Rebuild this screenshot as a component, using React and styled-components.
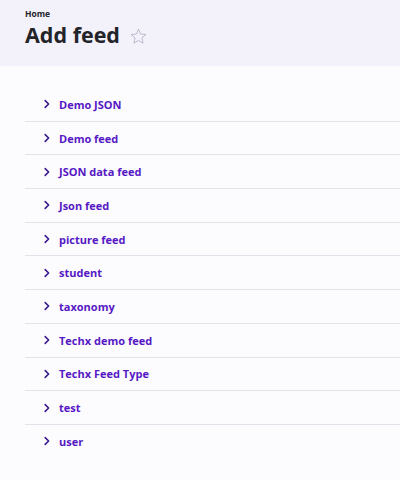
import React from "react";
import styled, { createGlobalStyle } from "styled-components";

const GlobalStyle = createGlobalStyle`
  body {
    margin: 0;
    background: #fcfcfe;
    font-family: "Open Sans", "DejaVu Sans", sans-serif;
  }
`;

const feeds = [
  "Demo JSON",
  "Demo feed",
  "JSON data feed",
  "Json feed",
  "picture feed",
  "student",
  "taxonomy",
  "Techx demo feed",
  "Techx Feed Type",
  "test",
  "user",
];

const App = () => {
  return (
    <>
      <GlobalStyle />
      <Header>
        <Crumb href="#">Home</Crumb>
        <TitleRow>
          <Title>Add feed</Title>
          <Star viewBox="0 0 24 24">
            <path d="M12 2.8l2.7 6.1 6.6.6-5 4.4 1.5 6.5L12 17l-5.8 3.4 1.5-6.5-5-4.4 6.6-.6z" />
          </Star>
        </TitleRow>
      </Header>
      <Main>
        <List>
          {feeds.map((name) => (
            <Item key={name}>
              <Link href="#">
                <Chevron viewBox="0 0 10 10">
                  <path d="M3.2 1.6L6.6 5 3.2 8.4" />
                </Chevron>
                {name}
              </Link>
            </Item>
          ))}
        </List>
      </Main>
    </>
  );
};
export default App;

const Header = styled.header`
  box-sizing: border-box;
  background: #f3f1f9;
  padding: 8px 25px 0;
  height: 66px;
`;
const Crumb = styled.a`
  display: block;
  font-size: 8.5px;
  font-weight: 700;
  color: #232429;
  text-decoration: none;
  line-height: 11px;
`;
const TitleRow = styled.div`
  display: flex;
  align-items: center;
  gap: 9px;
  margin-top: 2px;
`;
const Title = styled.h1`
  margin: 0;
  font-size: 21.5px;
  font-weight: 700;
  color: #232429;
  line-height: 28px;
`;
const Star = styled.svg`
  width: 19px;
  height: 19px;
  fill: none;
  stroke: #b4b1c6;
  stroke-width: 1.1;
  margin-top: 3px;
`;
const Main = styled.main`
  padding: 22px 0 0 25px;
`;
const List = styled.ul`
  list-style: none;
  margin: 0;
  padding: 0;
`;
const Item = styled.li`
  box-sizing: border-box;
  height: 33.7px;
  display: flex;
  align-items: center;
  border-top: 1px solid #e4e2ea;
  &:first-child {
    border-top: none;
    height: 32.7px;
  }
`;
const Link = styled.a`
  display: flex;
  align-items: center;
  gap: 7px;
  padding-left: 17px;
  font-size: 11px;
  font-weight: 700;
  color: #5618c4;
  text-decoration: none;
`;
const Chevron = styled.svg`
  width: 10px;
  height: 10px;
  fill: none;
  stroke: #3b1a8c;
  stroke-width: 1.6;
  stroke-linecap: round;
  stroke-linejoin: round;
`;
